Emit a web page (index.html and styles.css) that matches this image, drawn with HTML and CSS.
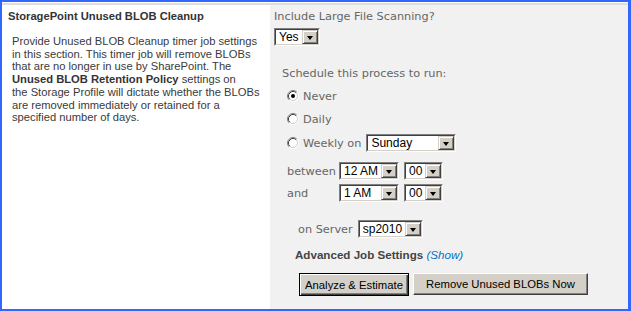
FILE: index.html
```html
<!DOCTYPE html>
<html lang="en">
<head>
    <meta charset="UTF-8">
    <title>StoragePoint Unused BLOB Cleanup</title>
    <link rel="stylesheet" href="styles.css">
</head>
<body>
    <div class="frame">
        <div class="top-rule"></div>
        <div class="section">
            <div class="desc">
                <h3 class="title">StoragePoint Unused BLOB Cleanup</h3>
                <p class="desc-text">
                    Provide Unused BLOB Cleanup timer job settings<br>
                    in this section. This timer job will remove BLOBs<br>
                    that are no longer in use by SharePoint. The<br>
                    <b>Unused BLOB Retention Policy</b> settings on<br>
                    the Storage Profile will dictate whether the BLOBs<br>
                    are removed immediately or retained for a<br>
                    specified number of days.
                </p>
            </div>

            <div class="controls">
                <div class="label">Include Large File Scanning?</div>
                <div class="select sel-yes"><div class="select-in"><span class="value">Yes</span><span class="arrow"></span></div></div>

                <div class="schedule">
                    <div class="label">Schedule this process to run:</div>
                    <div class="options">
                        <div class="row row-never">
                            <svg class="radio" width="12" height="12" viewBox="0 0 12 12">
                                <circle cx="6" cy="6" r="4.5" fill="#fff"/>
                                <path d="M2.11 9.89 A5.5 5.5 0 0 1 9.89 2.11" fill="none" stroke="#808080"/>
                                <path d="M9.89 2.11 A5.5 5.5 0 0 1 2.11 9.89" fill="none" stroke="#fff"/>
                                <path d="M2.82 9.18 A4.5 4.5 0 0 1 9.18 2.82" fill="none" stroke="#404040"/>
                                <path d="M9.18 2.82 A4.5 4.5 0 0 1 2.82 9.18" fill="none" stroke="#d4d0c8"/>
                                <circle cx="6" cy="6" r="2" fill="#000"/>
                            </svg>
                            <span class="opt">Never</span>
                        </div>
                        <div class="row row-daily">
                            <svg class="radio" width="12" height="12" viewBox="0 0 12 12">
                                <circle cx="6" cy="6" r="4.5" fill="#fff"/>
                                <path d="M2.11 9.89 A5.5 5.5 0 0 1 9.89 2.11" fill="none" stroke="#808080"/>
                                <path d="M9.89 2.11 A5.5 5.5 0 0 1 2.11 9.89" fill="none" stroke="#fff"/>
                                <path d="M2.82 9.18 A4.5 4.5 0 0 1 9.18 2.82" fill="none" stroke="#404040"/>
                                <path d="M9.18 2.82 A4.5 4.5 0 0 1 2.82 9.18" fill="none" stroke="#d4d0c8"/>
                            </svg>
                            <span class="opt">Daily</span>
                        </div>
                        <div class="row row-weekly">
                            <svg class="radio" width="12" height="12" viewBox="0 0 12 12">
                                <circle cx="6" cy="6" r="4.5" fill="#fff"/>
                                <path d="M2.11 9.89 A5.5 5.5 0 0 1 9.89 2.11" fill="none" stroke="#808080"/>
                                <path d="M9.89 2.11 A5.5 5.5 0 0 1 2.11 9.89" fill="none" stroke="#fff"/>
                                <path d="M2.82 9.18 A4.5 4.5 0 0 1 9.18 2.82" fill="none" stroke="#404040"/>
                                <path d="M9.18 2.82 A4.5 4.5 0 0 1 2.82 9.18" fill="none" stroke="#d4d0c8"/>
                            </svg>
                            <span class="opt">Weekly on</span>
                            <div class="select sel-day"><div class="select-in"><span class="value">Sunday</span><span class="arrow"></span></div></div>
                        </div>
                        <div class="row row-between">
                            <span class="time-label">between</span>
                            <div class="select sel-hour"><div class="select-in"><span class="value">12 AM</span><span class="arrow"></span></div></div>
                            <div class="select sel-min"><div class="select-in"><span class="value">00</span><span class="arrow"></span></div></div>
                        </div>
                        <div class="row row-and">
                            <span class="time-label">and</span>
                            <div class="select sel-hour"><div class="select-in"><span class="value">1 AM</span><span class="arrow"></span></div></div>
                            <div class="select sel-min"><div class="select-in"><span class="value">00</span><span class="arrow"></span></div></div>
                        </div>
                    </div>
                </div>

                <div class="row row-server">
                    <span class="label">on Server</span>
                    <div class="select sel-server"><div class="select-in"><span class="value">sp2010</span><span class="arrow"></span></div></div>
                </div>

                <div class="advanced"><b>Advanced Job Settings</b> <a class="show-link">(Show)</a></div>

                <div class="buttons">
                    <button class="btn btn-default">Analyze &amp; Estimate</button>
                    <button class="btn btn-remove">Remove Unused BLOBs Now</button>
                </div>
            </div>
        </div>
    </div>
</body>
</html>
```

FILE: styles.css
```css
body {
    margin: 0;
    font-family: "DejaVu Sans", Verdana, sans-serif;
}

.frame {
    width: 631px;
    height: 311px;
    box-sizing: border-box;
    border: 2px solid #3366ff;
    border-right-width: 3px;
    background-color: #fff;
    display: flex;
    flex-direction: column;
}

.top-rule {
    height: 2px;
    margin-top: 1px;
    background-color: #dedede;
}

.section {
    flex: 1;
    display: flex;
}

/* left column: title + description */
.desc {
    width: 268px;
    background-color: #fff;
    padding: 5px 0 0 6px;
    box-sizing: border-box;
    font-family: "Liberation Sans", Tahoma, sans-serif;
}

.title {
    margin: 0;
    font-size: 11.2px;
    line-height: 13px;
    font-weight: bold;
    color: #333;
}

.desc-text {
    margin: 12px 0 0 4px;
    font-size: 11.2px;
    line-height: 12.7px;
    color: #3a3a3a;
}

.desc-text b {
    color: #333;
}

/* right column: the controls */
.controls {
    flex: 1;
    background-color: #f1f1f1;
    padding: 5px 0 0 4px;
}

.label,
.opt,
.time-label {
    font-size: 11.3px;
    line-height: 13px;
    color: #666;
}

.sel-yes {
    margin-top: 5px;
    width: 46px;
}

.schedule {
    margin: 21px 0 0 8px;
}

.options {
    margin-left: 5px;
}

.row {
    display: flex;
    align-items: center;
    height: 18px;
}

.row-never { margin-top: 7px; }
.row-daily { margin-top: 5px; }
.row-weekly { margin-top: 6px; }
.row-between { margin-top: 10px; }
.row-and { margin-top: 4px; }

.radio {
    flex: none;
    margin-right: 4px;
}

.sel-day {
    margin-left: 5px;
    width: 90px;
}

.time-label {
    width: 52px;
}

.sel-hour {
    width: 60px;
}

.sel-min {
    width: 39px;
    margin-left: 5px;
}

.row-server {
    margin: 18px 0 0 24px;
}

.sel-server {
    margin-left: 5px;
    width: 65px;
}

/* classic sunken dropdown */
.select {
    flex: none;
    height: 18px;
    box-sizing: border-box;
    display: flex;
    border: 1px solid;
    border-color: #808080 #fff #fff #808080;
    background-color: #fff;
}

.select-in {
    flex: 1;
    display: flex;
    border: 1px solid;
    border-color: #404040 #d4d0c8 #d4d0c8 #404040;
}

.value {
    flex: 1;
    padding-left: 3px;
    font-family: "Liberation Sans", Tahoma, sans-serif;
    font-size: 12px;
    line-height: 14px;
    color: #000;
    white-space: nowrap;
    overflow: hidden;
}

.arrow {
    width: 16px;
    box-sizing: border-box;
    background-color: #d4d0c8;
    border: 1px solid;
    border-color: #d4d0c8 #404040 #404040 #d4d0c8;
    box-shadow: inset 1px 1px #fff, inset -1px -1px #808080;
    display: flex;
    align-items: center;
    justify-content: center;
}

.arrow::after {
    content: "";
    width: 0;
    height: 0;
    border-top: 4px solid #000;
    border-left: 3.5px solid transparent;
    border-right: 3.5px solid transparent;
    margin-top: 1px;
}

.advanced {
    margin: 10px 0 0 21px;
    font-family: "Liberation Sans", Tahoma, sans-serif;
    font-size: 11.6px;
    line-height: 13px;
    color: #444;
}

.show-link {
    font-style: italic;
    font-weight: normal;
    color: #0072c6;
}

.buttons {
    display: flex;
    align-items: flex-start;
    gap: 4px;
    margin: 12px 0 0 25px;
}

.btn {
    height: 22px;
    box-sizing: border-box;
    padding: 0;
    font-family: "Liberation Sans", Tahoma, sans-serif;
    font-size: 11.3px;
    color: #000;
    background-color: #d4d0c8;
    border: 1px solid;
    border-color: #fff #404040 #404040 #fff;
    box-shadow: inset -1px -1px #808080;
}

.btn-default {
    width: 110px;
    height: 23px;
    border: 1px solid #000;
    box-shadow: inset 1px 1px #fff, inset -1px -1px #404040, inset -2px -2px #808080;
}

.btn-remove {
    width: 175px;
}
```
